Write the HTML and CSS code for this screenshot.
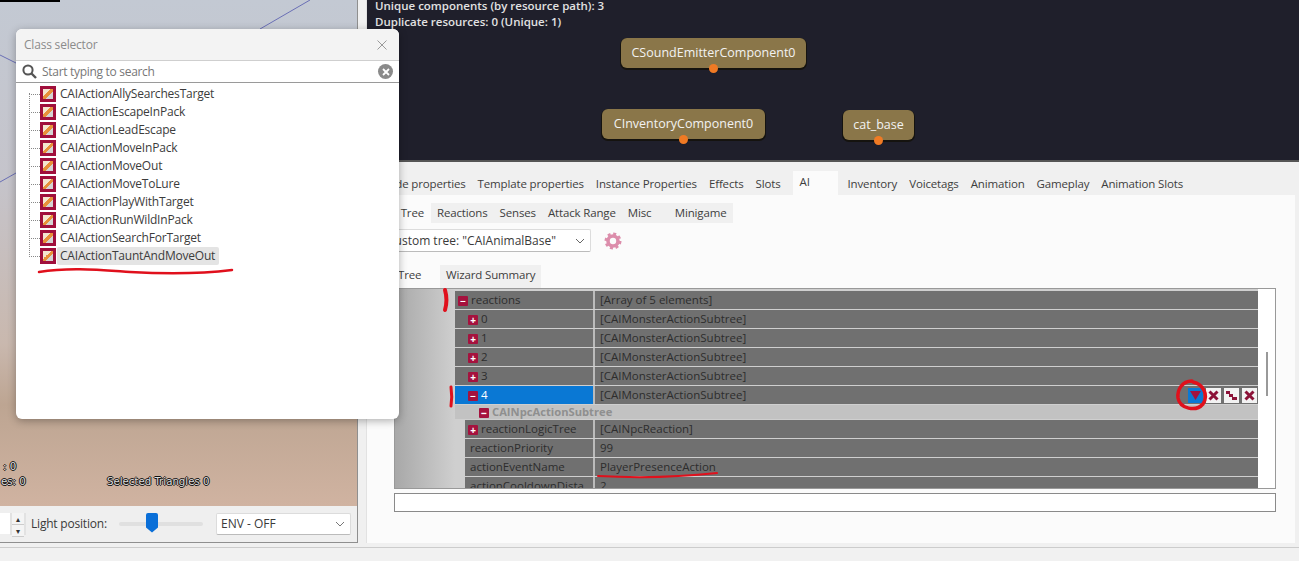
FILE: index.html
```html
<!DOCTYPE html>
<html lang="en">
<head>
    <meta charset="UTF-8">
    <title>Class selector</title>
    <link rel="stylesheet" href="styles.css">
</head>
<body>
    <div class="main">
        <div class="left">
            <div class="viewport">
                <div class="black-bar"></div>
                <svg class="view-lines" width="358" height="506">
                    <path d="M260 29L310 0M0 55L16 63M0 182L16 173" stroke="#6a6fb5" fill="none"/>
                </svg>
                <div class="stat stat-a">: 0</div>
                <div class="stat stat-b">es: 0</div>
                <div class="stat stat-c">Selected Triangles 0</div>
            </div>
            <div class="view-toolbar">
                <div class="spin-input"></div>
                <div class="spinner"><span>▴</span><span>▾</span></div>
                <label class="light-label">Light position:</label>
                <div class="slider"><div class="slider-thumb"></div></div>
                <div class="combo env-combo">ENV - OFF
                    <svg class="chev" width="10" height="6"><path d="M1 1L5 5L9 1" stroke="#777" fill="none"/></svg>
                </div>
            </div>
        </div>

        <div class="right">
            <div class="graph">
                <div class="graph-info">Unique components (by resource path): 3<br>Duplicate resources: 0 (Unique: 1)</div>
                <div class="node node-sound">CSoundEmitterComponent0<i></i></div>
                <div class="node node-inv">CInventoryComponent0<i></i></div>
                <div class="node node-cat">cat_base<i></i></div>
            </div>
            <div class="props">
                <div class="tabs top-tabs">
                    <span class="tab">Node properties</span>
                    <span class="tab">Template properties</span>
                    <span class="tab">Instance Properties</span>
                    <span class="tab">Effects</span>
                    <span class="tab">Slots</span>
                    <span class="tab active ai-tab">AI</span>
                    <span class="tab">Inventory</span>
                    <span class="tab">Voicetags</span>
                    <span class="tab">Animation</span>
                    <span class="tab">Gameplay</span>
                    <span class="tab">Animation Slots</span>
                </div>
                <div class="page">
                    <div class="tabs sub-tabs">
                        <span class="tab active tree-tab">AI Tree</span>
                        <span class="tab">Reactions</span>
                        <span class="tab">Senses</span>
                        <span class="tab">Attack Range</span>
                        <span class="tab misc-tab">Misc</span>
                        <span class="tab">Minigame</span>
                    </div>
                    <div class="tree-bar">
                        <div class="combo tree-combo">Custom tree: "CAIAnimalBase"
                            <svg class="chev" width="10" height="6"><path d="M1 1L5 5L9 1" stroke="#666" fill="none"/></svg>
                        </div>
                        <svg class="gear" width="18" height="18" viewBox="0 0 18 18">
                            <circle cx="9" cy="9" r="5" fill="none" stroke="#dc8dab" stroke-width="3.6"/>
                            <circle cx="9" cy="9" r="7.3" fill="none" stroke="#dc8dab" stroke-width="2.4" stroke-dasharray="3 2.73"/>
                        </svg>
                    </div>
                    <div class="tabs inner-tabs">
                        <span class="tab active inner-active">Tree</span>
                        <span class="tab">Wizard Summary</span>
                    </div>
                    <div class="grid-box">
                        <div class="rows">
                            <div class="row"><div class="name"><b class="toggle">−</b>reactions</div><div class="value">[Array of 5 elements]</div></div>
                            <div class="row sub"><div class="name"><b class="toggle">+</b>0</div><div class="value">[CAIMonsterActionSubtree]</div></div>
                            <div class="row sub"><div class="name"><b class="toggle">+</b>1</div><div class="value">[CAIMonsterActionSubtree]</div></div>
                            <div class="row sub"><div class="name"><b class="toggle">+</b>2</div><div class="value">[CAIMonsterActionSubtree]</div></div>
                            <div class="row sub"><div class="name"><b class="toggle">+</b>3</div><div class="value">[CAIMonsterActionSubtree]</div></div>
                            <div class="row sub selected">
                                <div class="name"><b class="toggle">−</b>4</div>
                                <div class="value">[CAIMonsterActionSubtree]</div>
                                <div class="row-actions">
                                    <span class="act act-down"><svg width="15" height="15"><path d="M2 3H13L7.5 12Z" fill="#a3123f"/></svg></span>
                                    <span class="act"><svg width="15" height="15"><path d="M3.5 3.5L11.5 11.5M11.5 3.5L3.5 11.5" stroke="#8c1238" stroke-width="3"/></svg></span>
                                    <span class="act"><svg width="15" height="15"><path d="M2 3H6V6H9V9H13V12H8V9H5V6H2Z" fill="#8c1238"/></svg></span>
                                    <span class="act"><svg width="15" height="15"><path d="M3.5 3.5L11.5 11.5M11.5 3.5L3.5 11.5" stroke="#8c1238" stroke-width="3"/></svg></span>
                                </div>
                            </div>
                            <div class="group-head"><b class="toggle">−</b>CAINpcActionSubtree</div>
                            <div class="row deep"><div class="name"><b class="toggle">+</b>reactionLogicTree</div><div class="value">[CAINpcReaction]</div></div>
                            <div class="row deep plain"><div class="name">reactionPriority</div><div class="value">99</div></div>
                            <div class="row deep plain"><div class="name">actionEventName</div><div class="value">PlayerPresenceAction</div></div>
                            <div class="row deep plain"><div class="name">actionCooldownDista</div><div class="value">2</div></div>
                        </div>
                        <div class="scroll-col"><div class="scroll-thumb"></div></div>
                    </div>
                    <div class="desc-box"></div>
                </div>
            </div>
        </div>
    </div>
    <div class="status-bar"></div>

    <!-- class selector popup -->
    <div class="dialog">
        <div class="dialog-title">
            <span>Class selector</span>
            <svg width="10" height="10"><path d="M0.5 0.5L9.5 9.5M9.5 0.5L0.5 9.5" stroke="#999"/></svg>
        </div>
        <div class="search">
            <svg width="15" height="15"><circle cx="6" cy="6" r="4.6" fill="none" stroke="#555" stroke-width="2"/><path d="M9 9L14 14" stroke="#555" stroke-width="2.4"/></svg>
            <span class="search-text">Start typing to search</span>
            <span class="search-clear"><svg width="8" height="8"><path d="M1 1L7 7M7 1L1 7" stroke="#fff" stroke-width="1.8"/></svg></span>
        </div>
        <ul class="class-list">
            <li><i class="cls-icon"></i><span>CAIActionAllySearchesTarget</span></li>
            <li><i class="cls-icon"></i><span>CAIActionEscapeInPack</span></li>
            <li><i class="cls-icon"></i><span>CAIActionLeadEscape</span></li>
            <li><i class="cls-icon"></i><span>CAIActionMoveInPack</span></li>
            <li><i class="cls-icon"></i><span>CAIActionMoveOut</span></li>
            <li><i class="cls-icon"></i><span>CAIActionMoveToLure</span></li>
            <li><i class="cls-icon"></i><span>CAIActionPlayWithTarget</span></li>
            <li><i class="cls-icon"></i><span>CAIActionRunWildInPack</span></li>
            <li><i class="cls-icon"></i><span>CAIActionSearchForTarget</span></li>
            <li class="picked"><i class="cls-icon"></i><span>CAIActionTauntAndMoveOut</span></li>
        </ul>
    </div>

    <!-- red marker notes drawn on top of the screenshot -->
    <svg class="marks" width="1299" height="561">
        <g fill="none" stroke="#e0101c" stroke-linecap="round">
            <path d="M39 272C70 267 100 270 130 272C165 274 200 274 232 270" stroke-width="2.5"/>
            <path d="M445 290C447 297 447 303 445 310" stroke-width="4"/>
            <path d="M451 387C452 394 452 400 451 406" stroke-width="3"/>
            <path d="M598 476C635 478 680 477 717 473" stroke-width="2"/>
            <path d="M1192 381C1182 381 1177 390 1178 398C1180 409 1196 412 1203 404C1209 395 1203 384 1193 382" stroke-width="3.5"/>
        </g>
    </svg>
</body>
</html>
```

FILE: styles.css
```css
* {
    box-sizing: border-box;
}
html, body {
    margin: 0;
    height: 561px;
    overflow: hidden;
}
body {
    position: relative;
    background-color: #f0f0f0;
    font-family: "Open Sans", "Noto Sans", sans-serif;
    font-size: 12px;
    color: #3a3a3a;
}
.main {
    display: flex;
    height: 543px;
}
.left {
    width: 358px;
    flex: none;
    display: flex;
    flex-direction: column;
    border-right: 1px solid #8f8f8f;
    border-bottom: 1px solid #8f8f8f;
}
.viewport {
    position: relative;
    height: 506px;
    background: linear-gradient(180deg, #c3c9d3 0%, #c5c4cb 35%, #c9b8ae 68%, #bda592 80%, #d0b3a1 100%);
}
.black-bar {
    position: absolute;
    left: 0;
    top: 0;
    width: 60px;
    height: 2px;
    background-color: #000;
}
.view-lines {
    position: absolute;
    left: 0;
    top: 0;
}
.stat {
    position: absolute;
    color: #ddd;
    font-family: "DejaVu Sans", sans-serif;
    font-size: 10.2px;
    line-height: 14px;
    text-shadow: -1px 0 #111, 1px 0 #111, 0 -1px #111, 0 1px #111;
    white-space: nowrap;
}
.stat-a {
    left: 3px;
    top: 460px;
}
.stat-b {
    left: 1px;
    top: 475px;
}
.stat-c {
    left: 107px;
    top: 475px;
}
.view-toolbar {
    flex: 1;
    display: flex;
    align-items: center;
    background-color: #efefef;
    padding-bottom: 1px;
}
.spin-input {
    width: 10px;
    height: 21px;
    background-color: #fff;
}
.spinner {
    width: 16px;
    height: 22px;
    display: flex;
    flex-direction: column;
    background-color: #e2e2e2;
    font-size: 8px;
    line-height: 11px;
    text-align: center;
    color: #333;
}
.spinner span {
    margin: 0 2px;
    background-color: #f4f4f4;
    border-bottom: 1px solid #ccc;
}
.light-label {
    margin-left: 5px;
    width: 88px;
    white-space: nowrap;
    letter-spacing: -0.2px;
}
.slider {
    position: relative;
    width: 84px;
    height: 4px;
    background-color: #e0e0e0;
    border-radius: 2px;
}
.slider-thumb {
    position: absolute;
    left: 27px;
    top: -9px;
    width: 12px;
    height: 20px;
    background-color: #0a6fd8;
    clip-path: polygon(0 0, 100% 0, 100% 75%, 50% 100%, 0 75%);
    border-radius: 2px;
}
.combo {
    display: flex;
    align-items: center;
    justify-content: space-between;
    height: 22px;
    padding: 0 5px 0 4px;
    background-color: #fff;
    border: 1px solid #dcdcdc;
    border-bottom-color: #bbb;
    border-radius: 2px;
    white-space: nowrap;
}
.env-combo {
    width: 135px;
    margin-left: 13px;
}
.right {
    flex: 1;
    margin-left: 8px;
    display: flex;
    flex-direction: column;
    min-width: 0;
    border-left: 1px solid #e2e2e2;
}
.graph {
    position: relative;
    height: 162px;
    background-color: #1f1f2b;
    border-bottom: 2px solid #555;
    flex: none;
}
.graph-info {
    padding: 0 0 0 8px;
    margin-top: -2px;
    line-height: 16px;
    color: #e2e2e2;
    font-weight: 600;
    font-size: 11.5px;
}
.node {
    position: absolute;
    height: 30px;
    line-height: 30px;
    text-align: center;
    color: #f2f2f2;
    background-color: #8a7649;
    border-radius: 6px;
    box-shadow: 0 1px 0 1px #15130f;
    white-space: nowrap;
    font-size: 12.5px;
}
.node i {
    position: absolute;
    left: 50%;
    bottom: -5px;
    width: 9px;
    height: 9px;
    margin-left: -5px;
    border-radius: 50%;
    background-color: #f07a24;
}
.node-sound {
    left: 254px;
    top: 38px;
    width: 185px;
}
.node-inv {
    left: 235px;
    top: 109px;
    width: 163px;
}
.node-cat {
    left: 476px;
    top: 110px;
    width: 71px;
}
.props {
    flex: 1;
    display: flex;
    flex-direction: column;
    min-height: 0;
}
.tabs {
    display: flex;
    white-space: nowrap;
    font-size: 11.5px;
    letter-spacing: -0.15px;
}
.tab {
    padding: 0 6px;
    background-color: #f0f0f0;
    color: #3e3e3e;
}
.tab.active {
    background-color: #fbfbfb;
}
.top-tabs {
    margin-top: 11px;
    height: 22px;
    line-height: 22px;
    padding-left: 7px;
}
.ai-tab {
    height: 24px;
    width: 45px;
    padding-left: 7px;
    margin: -2px 4px 0 6px;
}
.page {
    flex: 1;
    background-color: #fbfbfb;
    margin-right: 4px;
    display: flex;
    flex-direction: column;
    padding: 8px 19px 0 28px;
}
.sub-tabs {
    height: 20px;
    line-height: 20px;
}
.tree-tab {
    width: 58px;
    margin-left: -22px;
    text-align: right;
    padding-right: 7px;
}
.misc-tab {
    width: 47px;
}
.tree-bar {
    display: flex;
    align-items: center;
    gap: 13px;
    margin-top: 6px;
}
.tree-combo {
    width: 213px;
    height: 23px;
    padding-left: 8px;
    margin-left: -17px;
}
.gear {
    display: block;
}
.inner-tabs {
    margin-top: 13px;
    height: 23px;
    line-height: 20px;
}
.inner-active {
    width: 45px;
    padding-left: 3px;
    padding-right: 0;
}
.grid-box {
    display: flex;
    height: 201px;
    margin-left: -1px;
    border: 1px solid #999;
    background-color: #fff;
    overflow: hidden;
}
.rows {
    flex: 1;
    min-width: 0;
    padding: 2px 0 0 60px;
    font-size: 11.5px;
    background: linear-gradient(90deg, #a8a8a8 0, #cfcfcf 60px, #cfcfcf 100%);
}
.row {
    position: relative;
    display: flex;
    height: 18px;
    margin-bottom: 1px;
    line-height: 18px;
    color: #2d2d2d;
    background-color: #707070;
}
.name {
    width: 140px;
    flex: none;
    border-right: 2px solid #bbb;
    white-space: nowrap;
    overflow: hidden;
}
.value {
    padding-left: 5px;
}
.sub .name {
    padding-left: 10px;
}
.selected .name {
    background-color: #0a78d4;
    color: #fff;
}
.deep {
    margin-left: 10px;
}
.deep .name {
    width: 130px;
}
.plain .name {
    padding-left: 5px;
}
.toggle {
    display: inline-block;
    width: 10px;
    height: 10px;
    margin: 0 3px 0 3px;
    background-color: #a5123e;
    border-radius: 1px;
    color: #fff;
    font-size: 10px;
    line-height: 10px;
    text-align: center;
    vertical-align: -1px;
}
.group-head {
    height: 14px;
    margin: 0 0 1px 0;
    padding-left: 21px;
    line-height: 14px;
    background-color: #c2c2c2;
    color: #8f8f8f;
    font-weight: 700;
    font-size: 11.2px;
}
.row-actions {
    position: absolute;
    right: 1px;
    top: 2px;
    display: flex;
    gap: 3px;
}
.act {
    display: block;
    width: 15px;
    height: 15px;
    background-color: #f2f2f2;
}
.act-down {
    background-color: #0a78d4;
}
.scroll-col {
    width: 17px;
    flex: none;
    background-color: #fff;
    padding: 63px 0 0 8px;
}
.scroll-thumb {
    width: 2px;
    height: 44px;
    background-color: #999;
}
.desc-box {
    height: 19px;
    margin: 4px 0 0 -1px;
    background-color: #fff;
    border: 1px solid #8a8a8a;
}
.status-bar {
    height: 18px;
    margin-top: 4px;
    border-top: 1px solid #ccc;
    background-color: #f1f1f1;
}
.dialog {
    position: absolute;
    left: 16px;
    top: 29px;
    width: 383px;
    height: 390px;
    background-color: #fff;
    border-radius: 6px;
    box-shadow: 0 2px 8px rgba(0, 0, 0, 0.3);
    overflow: hidden;
}
.dialog-title {
    display: flex;
    align-items: center;
    justify-content: space-between;
    height: 31px;
    padding: 0 12px 0 8px;
    background-color: #f3f3f3;
    color: #8b8b8b;
    letter-spacing: -0.2px;
}
.search {
    display: flex;
    align-items: center;
    height: 23px;
    padding: 0 6px 0 6px;
    border-top: 1px solid #cfcfcf;
    border-bottom: 1px solid #9a9a9a;
    color: #777;
    letter-spacing: -0.3px;
}
.search-text {
    flex: 1;
    margin-left: 5px;
}
.search-clear {
    display: flex;
    align-items: center;
    justify-content: center;
    width: 15px;
    height: 15px;
    border-radius: 50%;
    background-color: #8a8a8a;
}
.class-list {
    position: relative;
    list-style: none;
    margin: 0;
    padding: 2px 0 0 24px;
}
/* dotted tree trunk + one branch per item */
.class-list::before {
    content: "";
    position: absolute;
    left: 13px;
    top: 10px;
    height: 162px;
    border-left: 1px dotted #888;
}
.class-list li {
    position: relative;
    display: flex;
    align-items: center;
    height: 18px;
}
.class-list li::before {
    content: "";
    position: absolute;
    left: -11px;
    top: 9px;
    width: 11px;
    border-top: 1px dotted #888;
}
.cls-icon {
    width: 16px;
    height: 16px;
    flex: none;
    border: 3px solid #a00f3c;
    background: linear-gradient(135deg, #f4e6d0 0 40%, #e8913a 40% 62%, #d4d4d4 62%);
}
.class-list span {
    margin-left: 1px;
    padding: 0 4px 0 3px;
    line-height: 18px;
    color: #3c3c3c;
    letter-spacing: -0.2px;
}
.picked span {
    background-color: #e4e4e4;
    border-radius: 2px;
}
.marks {
    position: absolute;
    left: 0;
    top: 0;
    pointer-events: none;
}
```
